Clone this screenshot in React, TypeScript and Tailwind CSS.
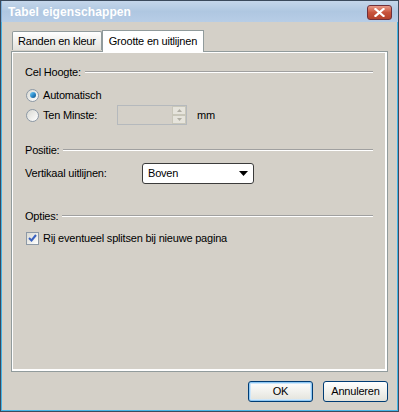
import React from 'react';

const font = "font-['Tahoma','Liberation_Sans',sans-serif]";

const SectionTitle: React.FC<{ label: string }> = ({ label }) => (
  <div className="flex items-center h-[16px]">
    <span className="text-[11px] text-black">{label}</span>
    <div className="flex-1 ml-[4px] mr-[2px] flex flex-col">
      <div className="h-px bg-[#a0a0a0]" />
      <div className="h-px bg-white" />
    </div>
  </div>
);

const Radio: React.FC<{ checked?: boolean }> = ({ checked }) => (
  <span className="inline-flex w-[13px] h-[13px] rounded-full border border-[#8d99a6] bg-gradient-to-br from-[#d9d9d3] to-white items-center justify-center">
    {checked && (
      <span className="w-[6px] h-[6px] rounded-full bg-gradient-to-br from-[#7ad3f2] via-[#2f8fd0] to-[#14507f]" />
    )}
  </span>
);

const App: React.FC = () => {
  return (
    <div className={`${font} tracking-[-0.2px] w-[399px] h-[412px] flex flex-col bg-[#d4d0c8] border border-[#3b4a5c] overflow-hidden select-none`}>
      {/* title bar */}
      <div className="h-[21px] flex items-center justify-between px-[6px] bg-gradient-to-b from-[#c4d6ea] via-[#afc7e1] to-[#b7cde6] border-l border-[#7fb1dc]">
        <span className="text-[12px] font-bold text-white tracking-[0.1px]">Tabel eigenschappen</span>
        <button className="w-[25px] h-[15px] mt-[1px] rounded-[3px] border border-[#6f2f3a] bg-gradient-to-b from-[#e89a88] via-[#c8533c] to-[#b4412c] flex items-center justify-center">
          <svg width="11" height="9" viewBox="0 0 11 9">
            <path d="M1.5 1 L9.5 8 M9.5 1 L1.5 8" stroke="#fff" strokeWidth="2.2" strokeLinecap="square" />
          </svg>
        </button>
      </div>

      <div className="flex-1 flex flex-col border-l border-r border-b border-[#46b4e6]">
        {/* tabs */}
        <div className="flex items-end h-[29px] pl-[10px]">
          <div className="h-[19px] mb-[1px] px-[5px] flex items-center border border-b-0 border-[#919b9c] rounded-t-[2px] bg-gradient-to-b from-white to-[#e3e2dc] text-[11px] text-black">
            Randen en kleur
          </div>
          <div className="relative h-[22px] -mb-px px-[6px] flex items-center border border-b-0 border-[#919b9c] bg-white text-[11px] text-black z-10">
            Grootte en uitlijnen
          </div>
        </div>

        {/* panel */}
        <div className="ml-[9px] mr-[9px] h-[321px] border border-[#919b9c] p-[1px] bg-white">
          <div className="h-full bg-[#d4d0c8] border-r border-b border-white pl-[12px] pr-[10px] pt-[11px] text-[11px] text-black">
            <SectionTitle label="Cel Hoogte:" />
            <div className="flex items-center h-[20px] mt-[5px] pl-[1px]">
              <Radio checked />
              <span className="ml-[4px]">Automatisch</span>
            </div>
            <div className="flex items-center h-[20px] pl-[1px]">
              <Radio />
              <span className="ml-[4px] w-[74px]">Ten Minste:</span>
              <div className="flex w-[70px] h-[20px] border border-[#b5b9bd] bg-[#d4d0c8]">
                <div className="flex-1" />
                <div className="w-[15px] flex flex-col border-l border-[#d4d0c8]">
                  <div className="flex-1 border border-[#c9c7ba] bg-[#e6e4dc] flex items-center justify-center">
                    <svg width="5" height="3" viewBox="0 0 5 3"><path d="M2.5 0 L5 3 L0 3Z" fill="#b0aea4" /></svg>
                  </div>
                  <div className="flex-1 border border-[#c9c7ba] bg-[#e6e4dc] flex items-center justify-center">
                    <svg width="5" height="3" viewBox="0 0 5 3"><path d="M0 0 L5 0 L2.5 3Z" fill="#b0aea4" /></svg>
                  </div>
                </div>
              </div>
              <span className="ml-[10px]">mm</span>
            </div>

            <div className="mt-[17px]">
              <SectionTitle label="Positie:" />
            </div>
            <div className="flex items-center h-[22px] mt-[4px]">
              <span className="w-[117px]">Vertikaal uitlijnen:</span>
              <div className="flex items-center w-[112px] h-[21px] rounded-[3px] border border-[#3b3b3b] bg-white pl-[5px] pr-[5px]">
                <span className="flex-1 pt-[1px]">Boven</span>
                <svg width="9" height="5" viewBox="0 0 9 5"><path d="M0 0 L9 0 L4.5 5Z" fill="#000" /></svg>
              </div>
            </div>

            <div className="mt-[24px]">
              <SectionTitle label="Opties:" />
            </div>
            <div className="flex items-center h-[20px] mt-[4px] pl-[1px]">
              <span className="w-[13px] h-[13px] border border-[#8d99a6] bg-gradient-to-br from-[#d9d9d3] to-white flex items-center justify-center">
                <svg width="9" height="8" viewBox="0 0 9 8">
                  <path d="M1 4 L3.5 6.5 L8 1" stroke="#3a62c0" strokeWidth="2" fill="none" />
                </svg>
              </span>
              <span className="ml-[4px]">Rij eventueel splitsen bij nieuwe pagina</span>
            </div>
          </div>
        </div>

        {/* footer */}
        <div className="flex justify-end items-start gap-[10px] pr-[9px] pt-[9px]">
          <button className="w-[65px] h-[21px] rounded-[3px] border border-[#003c74] bg-gradient-to-b from-white to-[#e3e3db] text-[11px] text-black shadow-[inset_0_0_0_1px_#8fc8f4,inset_0_0_0_2px_#cfe7fa]">
            OK
          </button>
          <button className="w-[65px] h-[21px] rounded-[3px] border border-[#003c74] bg-gradient-to-b from-white to-[#e3e3db] text-[11px] text-black">
            Annuleren
          </button>
        </div>
      </div>
    </div>
  );
};

export default App;
